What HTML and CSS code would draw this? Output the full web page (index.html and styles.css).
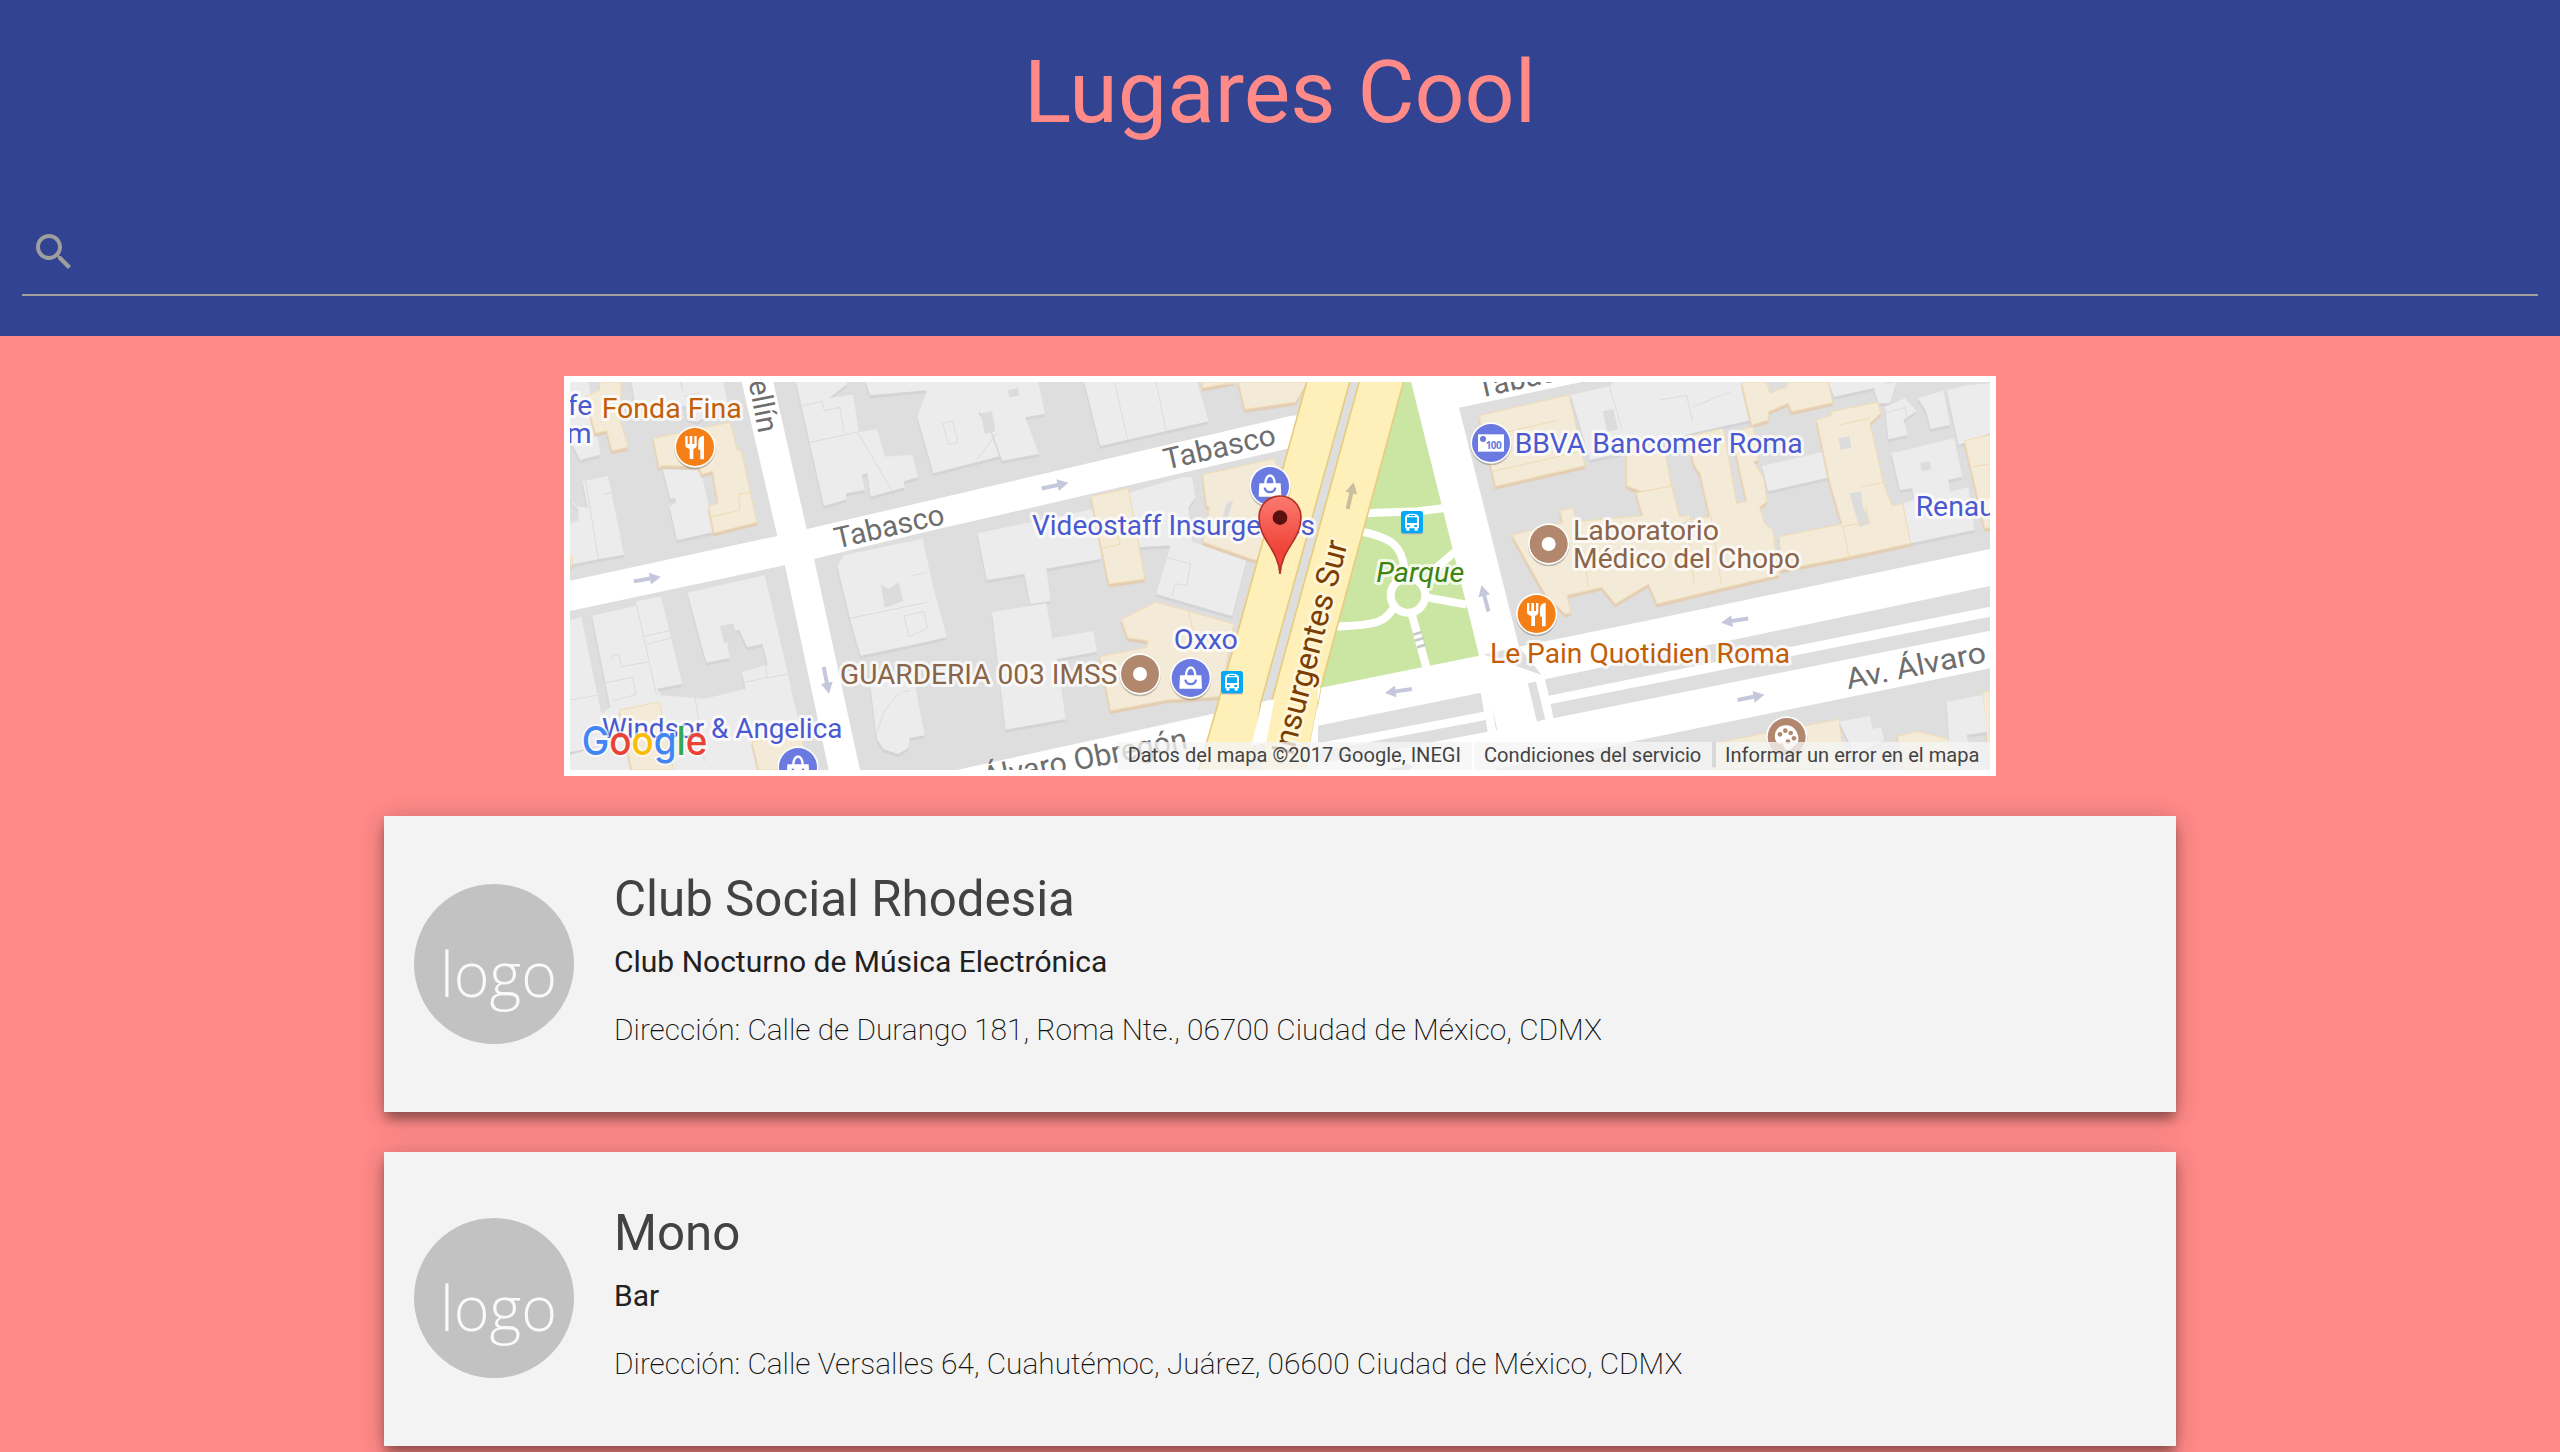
FILE: index.html
```
<!DOCTYPE html>
<html lang="es">
<head>
<meta charset="utf-8">
<title>Lugares Cool</title>
<link rel="stylesheet" href="styles.css">
</head>
<body>
<header class="header">
  <h1 class="title">Lugares Cool</h1>
  <div class="search">
    <svg class="search-icon" viewBox="0 0 24 24"><path d="M15.5 14h-.79l-.28-.27C15.41 12.59 16 11.11 16 9.5 16 5.91 13.09 3 9.5 3S3 5.91 3 9.5 5.91 16 9.5 16c1.61 0 3.09-.59 4.23-1.57l.27.28v.79l5 4.99L20.49 19l-4.99-5zm-6 0C7.01 14 5 11.99 5 9.5S7.01 5 9.5 5 14 7.01 14 9.5 11.99 14 9.5 14z"/></svg>
  </div>
</header>
<main class="content">
  <div class="map">
    <svg class="map-canvas" viewBox="30 36 4260 1164">
      <defs>
        <g id="disc"><circle cy="5" r="62" fill="#000" opacity=".22"/><circle r="62" fill="#fff"/><circle r="57"/></g>
        <g id="food"><use href="#disc" fill="#f57f17"/><path fill="#fff" d="M-29-33h7v24h6v-24h8v24h6v-24h7v28q0 8-10 11v30h-11V6q-13-3-13-11zM27-34V37H16V8H10v-25q2-16 17-17z"/></g>
        <g id="shop"><use href="#disc" fill="#6b7ae0"/><path fill="#fff" d="M-32-8h64l2 40h-68z"/><path fill="none" stroke="#fff" stroke-width="7" d="M-14-6c0-34 28-34 28 0"/><path fill="none" stroke="#6b7ae0" stroke-width="7" d="M-16 5c3 18 29 18 32 0"/></g>
        <g id="place"><use href="#disc" fill="#b1886e"/><circle r="21" fill="#fff"/></g>
        <g id="bus"><rect y="4" width="66" height="66" rx="8" fill="#9ab"/><rect width="66" height="66" rx="8" fill="#03a9f4"/><path fill="#fff" d="M12 52V20q0-12 21-12t21 12v32h-4v7h-9v-7H25v7h-9v-7z"/><path fill="#03a9f4" d="M18 19h30v17H18zM18 42h8v6h-8zM40 42h8v6h-8zM24 12h18v3H24z"/></g>
        <path id="arrow" d="M-41-6H8v-12L41 0 8 18V6h-49z"/>
      </defs>
      <rect x="30" y="36" width="4260" height="1164" fill="#dedede"/>

      <!-- grey buildings -->
      <g class="blocks">
        <path d="M30 36h55l20 120 17 98-62 16-30-60zM215 36h145l20 70-95 30-60-30zM365 36h125l12 60-90 60-30-10z"/>
        <path d="M68 334l76-16 48 236-77 14-85 16V460l25-8-1-34-24-36v-10l12 35 41 6zM308 295l115 8 40 183-112 25-22-100 20-14-4-12-14 2z"/>
        <path d="M382 668l232-52 70 296 12 60 30 120v108H30v-45l92-28-92 20V750l34-8 60 290 27-20-55-275 132-30v-14l75-13 64 262-76 14 12 20 132 10 122-30-12-50 78-22-16-62-45 10-25-52-40 10 12 74-70 14z"/>
        <path d="M708 36h153v6l-52 42 70-10 18 112 54-8 24 82 82-6 16 68-42 12 3 18-102 28-10-70-16 6 8 44-56 10 2 18-68 20z"/>
        <path d="M918 36h192v24l-180 16zM1110 36h210l10 90 36 4 4 10-25 8 15 100-240 62-48-170z"/>
        <path d="M832 588l20-32 236-50 30 140 42 155-58 14-200 42-32-110zM930 940l130-20 34 176-45 8-4 30-30 18-44-14-20-30z"/>
      </g>
      <g class="blocks" transform="translate(1080 0)">
        <path d="M210 36h145l20 96-60 10 42 110-110 20-40-110-30-40zM493 36h338l35 118-325 74zM172 490l380-80-8 156-165 30 12 98-60 8-18-90-112 18zM628 370l38-14 120-34h30l10 60-20 30 10 110-160 10zM216 727l163-28 18 106 122-22 12 62-120 22 26 180-180 32zM760 500l222 62-46 176-228-66z"/>
      </g>
      <g class="blocks" transform="translate(3240 0)">
        <path d="M-208 75L-90 48-80 36h390l20 115-170 38-210 60-100 20zM366 288l186-43 18 77-186 42zM754 250l188-45 25 115-42 10 5 35 55-14 18 129-191 40-24-120 34-10-5-35-37 5zM735 110l60-25 35 38-40 27 13 45-58 13zM833 85l77-23 20 103-58 12-14-54zM920 60l65-15 65-5v150l-95 35zM565 36h185l-50 19-118 25zM700 50l70-14-20 64-35 0z"/>
      </g>

      <!-- commercial buildings -->
      <g class="shops">
        <path d="M120 36h62l2 54-10 18 10 54 20 70-48 10-16-60-34 8-30-110 42-20zM280 205l230-48 22 84 12 0 46 216-128 32-16-80 28-10-16-96-32 10-10-24-110-2-8 8z"/>
        <path d="M178 1020l120-24 42 204H215zM576 1115l148-12 26 97H596zM30 558h6v30h-6z"/>
        <path d="M1593 380l112-25 50 272-108 15zM1926 36h100l-98 18zM2035 36h208l-36 60-152 22zM1928 314l212-48 18 30-62 270-12 4-98-34-56-20 18-104-8-4zM1788 696l234 66-42 218-160 10-168 32-32-162 140-28 4-20-60-8-20-56z"/>
      </g>
      <g class="shops" transform="translate(3240 0)">
        <path d="M-483 137l270-62 48 212-268 62zM-40 230l110-10 24 128-77 20-57-20z"/>
        <path d="M-384 495l152-37-8-36 38-9 10 42 200-18-20-69 107-20 23 92 30-5 2 15 60-10-30-130-15-20-25-90 110-25 40 225 30-6-45-205 65-20 15 100-14 6 30 50 10 70-22 16 15 50 25 20 17 134-180 42-185 45-25-60-100 60-40-50-105 24 11 51-17 5-60-60z"/>
        <path d="M305 36h75l10 34 50-20 5-14h120l13 62-123 27-10-25-60 25v25l-50 15zM417 500l189-38-36-122-40-190 45-15-5-10 145-28 7 33-32 30 40 180 27 68 31-8 24 120-184 40-203 40zM974 212l76-18v280h-16z"/>
      </g>
      <g class="yards">
        <path d="M963 645l25 12 28-20 14 56-56 20zM480 768l40-8 12 50-40 10zM1344 60l30-6 4 22-30 6zM1264 130l32-6 10 60-32 8zM2000 400l20-10-30 94-16 2zM3128 124l32-6 14 60-32 8zM3836 205l32-6 6 34-32 6zM4080 280l28-6 6 24-28 6zM3868 370l34-6 6 44 24 52-34 10zM3356 460l40-8 8 16-42 8z"/>
      </g>

      <!-- building outlines -->
      <g class="lines">
        <path d="M725 108l62-14 6 28 46-10 14 78M745 218l150-32M372 80l44-12 10 40M130 372l22-4M230 706l60 270M248 800l88-20M262 822l72-18M138 938l80-16 10 52-70 18M150 870l10-16 16 0 8 36 80-14M404 974l30 200M522 944l100-22-8-50M622 924l60-12M75 320l40 248M30 990l80-14M895 190l100 170M870 745l230-48M1032 738l60-14 10 50-55 26zM1060 616l40-8M1148 160l30-8 16 64-28 8zM1310 190l-60 80M950 1090l20-60q40-70 80-68"/>
        <path d="M1663 36l40 172M1788 36l30 144M1820 563l72 18-12 66-34-6-10 40M3145 36l40 140M3300 90l80-14 18 80M3400 110l110-44M3975 130l60-18 10 50"/>
      </g>
      <g class="lines warm">
        <path d="M455 440l85-20-4-46 34-8M1624 535l56-12-6-26M1886 726l14 60M2802 195l190-44M2797 305l270-62M3085 650l-14-110M3378 440l25 205M3483 640l-30-200M3850 470l16 90M3846 470l80-16-8-50M3905 350l70-14M4240 290l50-8M3840 165l90-20M4075 1106l80-16"/>
      </g>

      <!-- streets -->
      <g fill="#fff">
        <path d="M30 632L652 498 1080 398 2190 138 2240 132 2200 232 1080 490 762 567 30 723z"/>
        <path d="M545 36h95l100 442 22 89 138 633h-94L675 587 652 498z"/>
        <path d="M1190 1200L1965 1032 2240 975 2285 950 2757 857 2553 36h512L2697 113l180 717 393-80L4290 537v113l-1335 278L2877 830z"/>
        <path d="M2240 960l520-110 200 70 1330-270v550H1190l800-174z"/>
      </g>
      <g fill="#dedede">
        <path d="M2274 1067l488-99 10 57-498 95zM2274 1145l503-95 6 35-500 95zM2903 940l25-5 28 113-25 7zM2955 928L4290 648v62L2966 977zM2972 1002L4290 740v42L2980 1045zM2796 1010l16 70h-4zM2800 1200L4290 895v305zM2060 1200l12-90 60-14-20 104zM1280 1200l500-96"/>
      </g>
      <g class="shops"><path d="M3458 1120l380-72 18 152h-398zM4012 1098l60-14 120 30v86h-160zM4268 968l22-6v238z"/></g>
      <g class="blocks"><path d="M4160 995l108-20 14 110-62 10 10 50-60 6zM3838 1055l92-18 8 40 25-5 10 40-90 40z"/></g>

      <!-- park -->
      <path fill="#cbe6a3" d="M2520 36h33l204 821-475 96z"/>
      <g fill="none" stroke="#fff" stroke-width="24">
        <path d="M2415 430l160-6 80-10"/>
        <path d="M2405 485c95 20 120 45 128 110M2685 545l-70 60M2600 682l120 22M2325 770c140-5 145-15 180-60"/>
        <circle cx="2544" cy="676" r="52"/>
        <path d="M2556 735l44 160"/>
      </g>
      <path fill="#c9c9c9" d="M2559 790l26-8 2 8-26 8zM2564 808l26-8 2 8-26 8zM2570 828l26-8 2 8-26 8z"/>

      <!-- avenue -->
      <path fill="#dedede" d="M2370 36h30L2100 1000l-26 2z"/>
      <g fill="#ffefb8" stroke="#e5cd82" stroke-width="5">
        <path d="M2242 30h129L2102 1000l-28 206H1914l51-174z"/>
        <path d="M2399 30h133L2282 953l-47 253h-90l-42-90 45-170z"/>
      </g>
      <path fill="#fff" d="M2105 1000l40-12-25 130-46 10z"/>
      <path fill="#ffefb8" d="M2146 975L2103 1200h130l46-240z"/>
      <path fill="#fff" d="M2282 953l-47 247h38v-250z"/>

      <g fill="#c5c8dc">
        <use href="#arrow" transform="translate(262 627) rotate(-10)"/>
        <use href="#arrow" transform="translate(1485 347) rotate(-12)"/>
        <use href="#arrow" transform="translate(799 931) rotate(79)"/>
        <use href="#arrow" transform="translate(2775 685) rotate(-105)"/>
        <use href="#arrow" transform="translate(2515 963) rotate(172)"/>
        <use href="#arrow" transform="translate(3524 752) rotate(171)"/>
        <use href="#arrow" transform="translate(3573 982) rotate(-11)"/>
        <use href="#arrow" transform="translate(2520 1197) rotate(-11)"/>
        <use href="#arrow" transform="translate(2372 377) rotate(-77)" fill="#cabf9c"/>
      </g>

      <g class="street">
        <text transform="translate(830 536) rotate(-12.9)" textLength="336" lengthAdjust="spacingAndGlyphs">Tabasco</text>
        <text transform="translate(1818 299) rotate(-12.9)" textLength="342" lengthAdjust="spacingAndGlyphs">Tabasco</text>
        <text transform="translate(2758 84) rotate(-12.5)" textLength="338" lengthAdjust="spacingAndGlyphs">Tabasco</text>
        <text transform="translate(596 192) rotate(79)" text-anchor="end">Medellín</text>
        <text transform="translate(3864 958) rotate(-11.2)" textLength="426" lengthAdjust="spacingAndGlyphs">Av. Álvaro</text>
        <text class="wide" transform="translate(1886 1136) rotate(-11)" text-anchor="end">Av. Álvaro Obregón</text>
      </g>
      <text class="avenue" transform="translate(2363 520) rotate(-75.6)" text-anchor="end">Insurgentes Sur</text>

      <use href="#shop" x="2130" y="348"/>
      <g class="poi">
        <g fill="#4b59d1">
          <text x="97" y="135" text-anchor="end">Cafe</text>
          <text x="95" y="220" text-anchor="end">m</text>
          <text x="126" y="1103" textLength="721" lengthAdjust="spacingAndGlyphs">Windsor &amp; Angelica</text>
          <text x="1416" y="494" textLength="849" lengthAdjust="spacingAndGlyphs">Videostaff Insurgentes</text>
          <text x="1841" y="836" textLength="193" lengthAdjust="spacingAndGlyphs">Oxxo</text>
          <text x="2864" y="248" textLength="864" lengthAdjust="spacingAndGlyphs">BBVA Bancomer Roma</text>
          <text x="4067" y="438">Renault</text>
        </g>
        <g fill="#c25e08">
          <text x="125" y="143" textLength="420" lengthAdjust="spacingAndGlyphs">Fonda Fina</text>
          <text x="2790" y="878" textLength="900" lengthAdjust="spacingAndGlyphs">Le Pain Quotidien Roma</text>
        </g>
        <g fill="#8a6549">
          <text x="840" y="941" textLength="832" lengthAdjust="spacingAndGlyphs">GUARDERIA 003 IMSS</text>
          <text x="3039" y="509" textLength="438" lengthAdjust="spacingAndGlyphs">Laboratorio</text>
          <text x="3039" y="594" textLength="681" lengthAdjust="spacingAndGlyphs">Médico del Chopo</text>
        </g>
        <text x="2449" y="635" textLength="264" lengthAdjust="spacingAndGlyphs" fill="#3f8410" font-style="italic">Parque</text>
      </g>

      <use href="#food" x="405" y="231"/>
      <use href="#food" x="2930" y="732"/>
      <use href="#shop" x="1892" y="924"/>
      <use href="#shop" x="714" y="1191"/>
      <use href="#place" x="1740" y="912"/>
      <use href="#place" x="2966" y="522"/>
      <use href="#bus" x="1983" y="903"/>
      <use href="#bus" x="2523" y="423"/>
      <g transform="translate(2793 219)">
        <use href="#disc" fill="#6b7ae0"/><path fill="#fff" d="M-39-26h78v52h-78z"/><circle cx="-24" cy="-12" r="9" fill="#6b7ae0"/>
        <text x="-16" y="18" class="bill" textLength="48">100</text>
      </g>
      <g transform="translate(3680 1101)">
        <use href="#disc" fill="#b1886e"/>
        <path fill="#fff" d="M-35-8c4-34 50-34 62-12 12 16 10 40 0 44-8 2-9 14-22 16-16 0-12-22-22-20-14 2-20-12-18-28z"/>
        <g fill="#b1886e"><circle cx="-20" cy="-8" r="7"/><circle cx="-4" cy="-19" r="7"/><circle cx="12" cy="-12" r="7"/><circle cx="22" cy="4" r="7"/><circle cx="4" cy="14" r="7"/></g>
      </g>

      <!-- marker -->
      <linearGradient id="pin" x2="0" y2="1"><stop stop-color="#fb7a70"/><stop offset=".7" stop-color="#f04338"/></linearGradient>
      <path d="M2160 612c-6-80-63-100-63-171a63 63 0 0 1 126 0c0 71-57 91-63 171z" fill="url(#pin)" stroke="#b2322a" stroke-width="5"/>
      <circle cx="2160" cy="443" r="22" fill="#5b1110"/>

      <text class="brand" x="65" y="1154" textLength="377" lengthAdjust="spacingAndGlyphs"><tspan fill="#4285f4">G</tspan><tspan fill="#ea4335">o</tspan><tspan fill="#fbbc05">o</tspan><tspan fill="#4285f4">g</tspan><tspan fill="#34a853">l</tspan><tspan fill="#ea4335">e</tspan></text>

      <path fill="#f5f5f5" opacity=".78" d="M1673 1116h2617v84H1673z"/>
      <path fill="#fff" d="M2735 1116h7v84h-7z"/><path fill="#d8d8d8" d="M3456 1116h12v76h-12z"/>
      <g class="legal">
        <text x="1703" y="1175" textLength="1000" lengthAdjust="spacingAndGlyphs">Datos del mapa ©2017 Google, INEGI</text>
        <text x="2772" y="1175" textLength="652" lengthAdjust="spacingAndGlyphs">Condiciones del servicio</text>
        <text x="3495" y="1175" textLength="763" lengthAdjust="spacingAndGlyphs">Informar un error en el mapa</text>
      </g>
    </svg>
  </div>

  <section class="places">
    <article class="card">
      <svg class="logo" viewBox="0 0 160 160"><circle cx="80" cy="80" r="80"/><text x="26" y="113" textLength="117" lengthAdjust="spacingAndGlyphs">logo</text></svg>
      <div class="info">
        <h2 class="name">Club Social Rhodesia</h2>
        <p class="kind">Club Nocturno de Música Electrónica</p>
        <p class="address">Dirección: Calle de Durango 181, Roma Nte., 06700 Ciudad de México, CDMX</p>
      </div>
    </article>
    <article class="card">
      <svg class="logo" viewBox="0 0 160 160"><circle cx="80" cy="80" r="80"/><text x="26" y="113" textLength="117" lengthAdjust="spacingAndGlyphs">logo</text></svg>
      <div class="info">
        <h2 class="name">Mono</h2>
        <p class="kind">Bar</p>
        <p class="address">Dirección: Calle Versalles 64, Cuahutémoc, Juárez, 06600 Ciudad de México, CDMX</p>
      </div>
    </article>
  </section>
</main>
</body>
</html>
```
FILE: styles.css
```
* { box-sizing: border-box; }
html { height: 100%; overflow: hidden; }
body {
  margin: 0;
  height: 100%;
  overflow: hidden;
  background: #ff8a88;
  color: #212121;
  font-family: Roboto, "Liberation Sans", sans-serif;
}
h1, h2, p { margin: 0; font-weight: 400; }

.header { height: 336px; padding: 48px 22px 0; background: #314391; }
.title { font-size: 87.8px; line-height: 88px; color: #ff8a88; text-align: center; }
.search { margin-top: 92px; padding: 0 8px 18px; border-bottom: 2px solid #9e9e9e; }
.search-icon { display: block; width: 48px; height: 48px; fill: #9e9e9e; }

.content { display: flex; flex-direction: column; align-items: center; gap: 40px; padding-top: 40px; }
.map { width: 1432px; height: 400px; border: 6px solid #fff; }
.map-canvas { display: block; width: 1420px; height: 388px; }

.blocks { fill: #ececec; filter: drop-shadow(-1px 9px 0 #d3d3d8); }
.shops { fill: #f3ead7; stroke: #f0dcb4; stroke-width: 3; filter: drop-shadow(-1px 9px 0 #e3cdb5); }
.yards { fill: #dcdcdc; }
.lines { fill: none; stroke: #dcdcdc; stroke-width: 3; }
.lines.warm { stroke: #f0dcb4; }
.street { font-size: 88px; fill: #6e6e6e; }
.street .wide { font-size: 91px; }
.avenue { font-size: 95px; fill: #7a3e00; stroke: #fff6d8; stroke-width: 16px; stroke-linejoin: round; paint-order: stroke; }
.poi { font-size: 85px; stroke: rgba(255, 255, 255, .75); stroke-width: 18px; stroke-linejoin: round; paint-order: stroke; }
.bill { font: 700 30px "Open Sans", sans-serif; fill: #6b7ae0; }
.brand { font: 500 120px Inter, sans-serif; stroke: rgba(255, 255, 255, .7); stroke-width: 12px; paint-order: stroke; }
.legal { font-size: 58px; fill: #444; }

.places { display: flex; flex-direction: column; gap: 40px; width: 70%; }
.card {
  display: flex;
  gap: 40px;
  padding: 51px 30px 62px;
  background: #f3f3f3;
  box-shadow: 0 8px 10px -2px rgba(0, 0, 0, .28), 0 8px 10px rgba(0, 0, 0, .08), 0 4px 24px rgba(0, 0, 0, .24);
}
.card:first-child { padding-top: 53px; }
.logo { flex: none; width: 160px; height: 160px; margin-top: 15px; fill: #c2c2c2; }
.logo text { font: 300 62px "Open Sans", sans-serif; fill: #fafafa; }
.name { font-size: 49.28px; line-height: 60px; color: #424242; }
.kind { margin-top: 13px; font-size: 30px; line-height: 40px; }
.address { margin-top: 28px; font-size: 29.83px; line-height: 40px; font-weight: 200; color: #111; }
```
